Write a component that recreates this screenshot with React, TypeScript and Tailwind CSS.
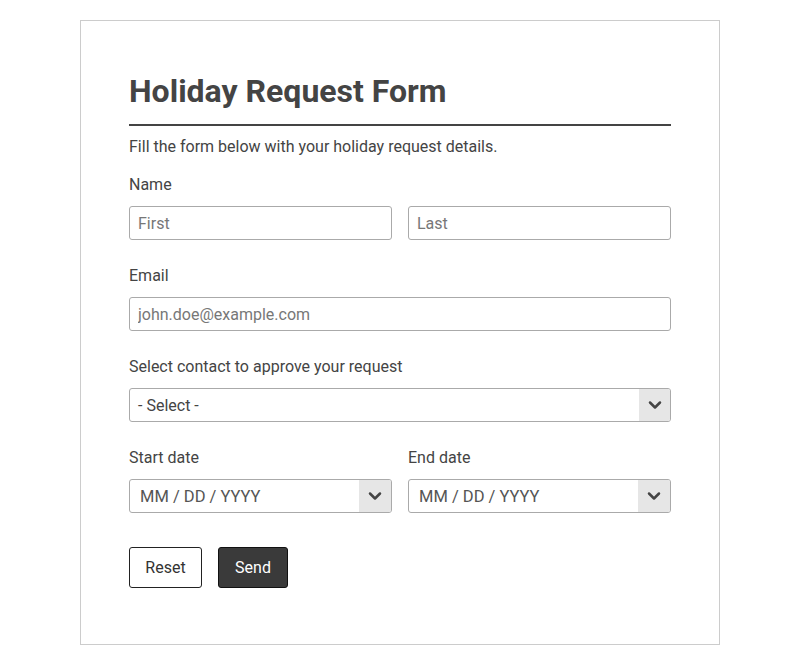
import { ChevronDown } from "lucide-react";

function Label({ children }: { children: React.ReactNode }) {
  return <label className="mb-[9px] block text-base leading-6 text-[#444]">{children}</label>;
}

function TextInput({ placeholder }: { placeholder: string }) {
  return (
    <input
      type="text"
      placeholder={placeholder}
      className="h-[34px] w-full rounded-[3px] border border-[#aaa] bg-white px-2 text-base text-[#444] outline-none placeholder:text-[#777]"
    />
  );
}

function SelectBox({ text }: { text: string }) {
  return (
    <div className="flex h-[34px] w-full overflow-hidden rounded-[3px] border border-[#aaa] bg-white">
      <div className="flex flex-1 items-center px-2 pt-[1px] text-base text-[#444]">{text}</div>
      <div className="flex w-[31px] items-center justify-center bg-[#e6e6e6]">
        <ChevronDown size={20} strokeWidth={3} className="text-[#444]" />
      </div>
    </div>
  );
}

function DateBox() {
  return (
    <div className="flex h-[34px] w-full overflow-hidden rounded-[3px] border border-[#aaa] bg-white">
      <div className="flex flex-1 items-center pl-[10px] pt-[3px] text-[16.5px] text-[#555]">MM / DD / YYYY</div>
      <div className="flex w-[32px] items-center justify-center bg-[#e6e6e6]">
        <ChevronDown size={20} strokeWidth={3} className="text-[#444]" />
      </div>
    </div>
  );
}

export default function App() {
  return (
    <div className="min-h-[645px] bg-white pt-5" style={{ fontFamily: "Roboto, sans-serif" }}>
      <div className="mx-auto w-[640px] border border-[#ccc] px-12 pb-[56px] pt-[51px]">
        <h1 className="border-b-2 border-[#444] pb-[14px] text-[32px] font-bold leading-[38px] text-[#444]">
          Holiday Request Form
        </h1>
        <p className="mt-[9px] text-base leading-6 text-[#444]">
          Fill the form below with your holiday request details.
        </p>

        <div className="mt-[14px]">
          <Label>Name</Label>
          <div className="grid grid-cols-2 gap-4">
            <TextInput placeholder="First" />
            <TextInput placeholder="Last" />
          </div>
        </div>

        <div className="mt-6">
          <Label>Email</Label>
          <TextInput placeholder="john.doe@example.com" />
        </div>

        <div className="mt-6">
          <Label>Select contact to approve your request</Label>
          <SelectBox text="- Select -" />
        </div>

        <div className="mt-6 grid grid-cols-2 gap-4">
          <div>
            <Label>Start date</Label>
            <DateBox />
          </div>
          <div>
            <Label>End date</Label>
            <DateBox />
          </div>
        </div>

        <div className="mt-[34px] flex gap-4">
          <button className="h-[41px] w-[73px] rounded-[3px] border border-[#222] bg-white text-base text-[#333]">
            Reset
          </button>
          <button className="h-[41px] w-[70px] rounded-[3px] border border-[#111] bg-[#3a3a3a] text-base text-white">
            Send
          </button>
        </div>
      </div>
    </div>
  );
}
